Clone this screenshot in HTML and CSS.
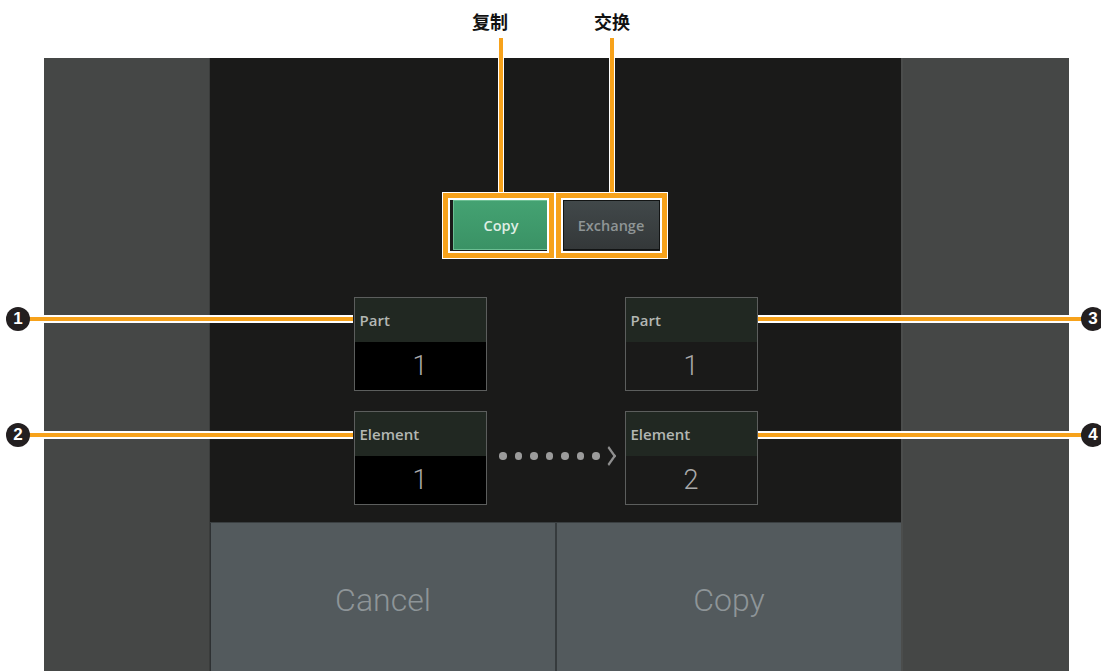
FILE: index.html
```html
<!DOCTYPE html>
<html lang="zh">
<head>
<meta charset="utf-8">
<title>Copy / Exchange</title>
<link rel="stylesheet" href="styles.css">
</head>
<body>
<div class="page">
  <div class="top-strip"></div>
  <div class="screen">
    <div class="side side-left"></div>
    <div class="center">
      <div class="work">
        <div class="mode-row">
          <div class="mode mode-copy">Copy</div>
          <div class="mode mode-exch">Exchange</div>
        </div>
        <div class="grid">
          <div class="box">
            <div class="box-head">Part</div>
            <div class="box-val val-src">1</div>
          </div>
          <div class="spacer"></div>
          <div class="box">
            <div class="box-head">Part</div>
            <div class="box-val">1</div>
          </div>
          <div class="box">
            <div class="box-head">Element</div>
            <div class="box-val val-src">1</div>
          </div>
          <div class="arrow">
            <span class="dot"></span><span class="dot"></span><span class="dot"></span><span class="dot"></span><span class="dot"></span><span class="dot"></span><span class="dot"></span>
            <span class="chev"></span>
          </div>
          <div class="box">
            <div class="box-head">Element</div>
            <div class="box-val">2</div>
          </div>
        </div>
      </div>
      <div class="actions">
        <div class="act">Cancel</div>
        <div class="act">Copy</div>
      </div>
    </div>
    <div class="side side-right"></div>
  </div>

  <div class="callouts">
    <div class="label label-copy">复制</div>
    <div class="label label-exch">交换</div>
    <div class="vline vline-copy"></div>
    <div class="vline vline-exch"></div>
    <div class="frame frame-copy"></div>
    <div class="frame frame-exch"></div>
    <div class="hline hline-1"></div>
    <div class="hline hline-2"></div>
    <div class="hline hline-3"></div>
    <div class="hline hline-4"></div>
    <div class="num num-1">1</div>
    <div class="num num-2">2</div>
    <div class="num num-3">3</div>
    <div class="num num-4">4</div>
  </div>
</div>
</body>
</html>
```
FILE: styles.css
```css
html, body {
  margin: 0;
  padding: 0;
  background: #ffffff;
}
body {
  width: 1101px;
  height: 671px;
  overflow: hidden;
  font-family: "Open Sans", "Noto Sans", sans-serif;
}
.page {
  position: relative;
  width: 1101px;
  height: 671px;
  overflow: hidden;
}
.top-strip {
  height: 58px;
}
.screen {
  display: flex;
  margin-left: 44px;
  width: 1025px;
  height: 613px;
}
.side {
  background: #454746;
}
.side-left {
  width: 165px;
  border-right: 1px solid #3a3c3b;
}
.side-right {
  width: 166px;
  border-left: 2px solid #4b4d4c;
}
.center {
  width: 691px;
  display: flex;
  flex-direction: column;
  background: #1a1a19;
}
.work {
  height: 464px;
  display: flex;
  flex-direction: column;
  align-items: center;
}
.mode-row {
  margin-top: 142px;
  display: flex;
  gap: 13px;
  padding-left: 1px;
}
.mode {
  width: 97px;
  height: 50px;
  box-sizing: border-box;
  display: flex;
  align-items: center;
  justify-content: center;
  font-weight: 600;
  font-size: 14.5px;
}
.mode-copy {
  background: linear-gradient(#44a272, #3a9265);
  border: 1px solid #6cbf93;
  color: #dfeee4;
}
.mode-exch {
  background: linear-gradient(#41484a, #343839);
  border: 1px solid #121414;
  color: #8f9596;
}
.grid {
  margin-top: 47px;
  display: grid;
  grid-template-columns: 133px 138px 133px;
  grid-template-rows: 94px 94px;
  row-gap: 20px;
}
.box {
  border: 1px solid #5c5e5d;
  display: flex;
  flex-direction: column;
}
.box-head {
  height: 44px;
  background: #212822;
  color: #b3b7b3;
  font-weight: 600;
  font-size: 15px;
  padding-left: 5px;
  line-height: 44px;
}
.box-val {
  flex: 1;
  background: #1a1a19;
  color: #a9a9a9;
  font-family: Roboto, "Open Sans", sans-serif;
  font-weight: 300;
  font-size: 27px;
  display: flex;
  align-items: center;
  justify-content: center;
}
.val-src {
  background: #000000;
}
.arrow {
  display: flex;
  align-items: center;
  justify-content: center;
  gap: 8px;
  padding-top: 44px;
  height: 2px;
  padding-left: 2px;
}
.dot {
  width: 7.5px;
  height: 7.5px;
  border-radius: 50%;
  background: #9b9b9b;
  flex: none;
}
.chev {
  width: 8px;
  height: 8px;
  border-top: 2px solid #8f8f8f;
  border-right: 2px solid #8f8f8f;
  transform: scaleY(1.4) rotate(45deg);
  margin-left: -4px;
  flex: none;
}
.actions {
  flex: 1;
  display: flex;
  border-top: 1px solid #3a3f41;
}
.act {
  flex: 1;
  background: #535a5d;
  color: #8e9598;
  font-family: Roboto, "Open Sans", sans-serif;
  font-weight: 300;
  font-size: 32px;
  text-align: center;
  padding-top: 61px;
  line-height: 32px;
}
.act + .act {
  border-left: 2px solid #363b3d;
}
.act:first-child {
  border-left: 1px solid #2e3133;
}

/* callouts overlay */
.callouts {
  position: absolute;
  inset: 0;
  pointer-events: none;
}
.label {
  position: absolute;
  top: 9px;
  font-family: "Noto Sans CJK SC", sans-serif;
  font-weight: 700;
  font-size: 18px;
  line-height: 24px;
  color: #111;
}
.label-copy { left: 472px; }
.label-exch { left: 594px; }
.vline {
  position: absolute;
  top: 38px;
  height: 156px;
  width: 4px;
  background: #f7a21b;
  border-left: 1px solid #fff;
  border-right: 1px solid #fff;
}
.vline-copy { left: 498px; }
.vline-exch { left: 609px; }
.frame {
  position: absolute;
  top: 193px;
  height: 65px;
  box-sizing: border-box;
  border: 5px solid #f7a21b;
  box-shadow: 0 0 0 1px #ffffff, inset 0 0 0 2px #ffffff;
}
.frame-copy { left: 443px; width: 111px; }
.frame-exch { left: 556px; width: 111px; }
.hline {
  position: absolute;
  height: 4px;
  background: #f7a21b;
  border-top: 2px solid #fff;
  border-bottom: 2px solid #fff;
}
.hline-1 { top: 315px; left: 28px; width: 325px; }
.hline-2 { top: 431px; left: 28px; width: 325px; }
.hline-3 { top: 315px; left: 758px; width: 330px; }
.hline-4 { top: 431px; left: 758px; width: 330px; }
.num {
  position: absolute;
  width: 24px;
  height: 24px;
  border-radius: 50%;
  background: #231f20;
  color: #fff;
  font-family: "Liberation Sans", Arial, sans-serif;
  font-weight: 700;
  font-size: 17px;
  line-height: 24px;
  text-align: center;
}
.num-1 { left: 6px; top: 307px; }
.num-2 { left: 6px; top: 423px; }
.num-3 { left: 1081px; top: 307px; }
.num-4 { left: 1081px; top: 423px; }
```
